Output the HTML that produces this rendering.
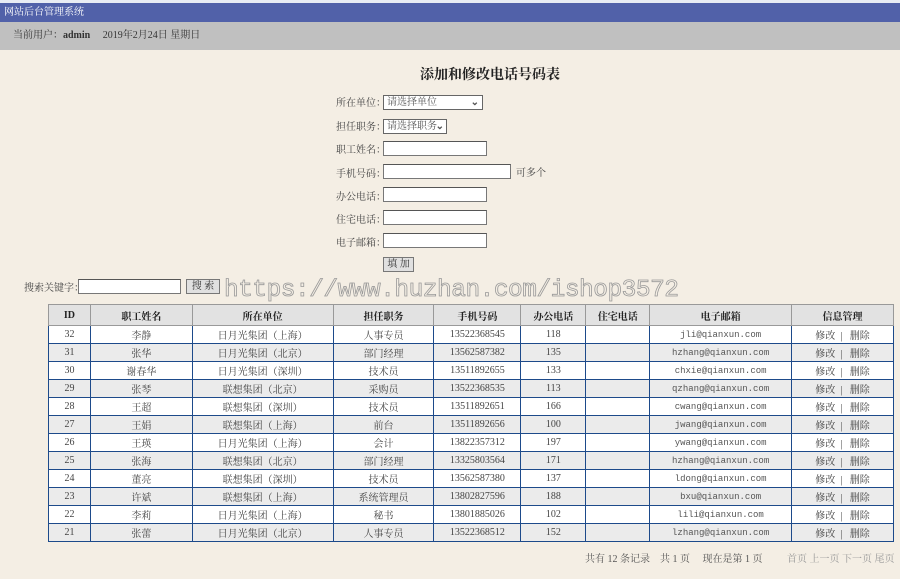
<!DOCTYPE html>
<html><head><meta charset="utf-8"><style>
*{margin:0;padding:0;box-sizing:border-box}
body{width:900px;height:579px;background:#f4eee4;font-family:"Liberation Serif","Noto Serif CJK SC",serif;font-size:10px;color:#333;position:relative;overflow:hidden}
.a{position:absolute;white-space:nowrap;line-height:12px}
.top{left:0;top:0;width:900px;height:3px;background:#e8ecf4}
.bar{left:0;top:3px;width:900px;height:19px;background:#5161a9;color:#fff;font-size:10px;line-height:19px;padding-left:4px}
.gray{left:0;top:22px;width:900px;height:28px;background:#c0c0c0;line-height:28px;padding-left:13px;font-size:10px}
.lab{left:336px;color:#444;margin-top:2px}
.inp{background:#fff;border:1px solid #777;border-top-color:#555;height:15px}
.sel{background:#fff;border:1px solid #666;height:15px;font-size:10px;color:#555;line-height:13px;padding-left:3px}
.btn{background:#e0e0e0;border:1px solid #777;height:15px;font-size:10px;line-height:13px;text-align:center;color:#333}
table{position:absolute;left:48px;top:304px;width:846px;border-collapse:collapse;font-size:10px}
th{height:21px;background:#e2e2e2;border:1px solid #999;font-weight:bold;color:#222}
td{height:18px;border:1px solid #1d4a8a;text-align:center;color:#444}
tbody tr:nth-child(even) td{background:#ebebeb}
tbody tr:nth-child(odd) td{background:#fff}
.m{font-family:"Liberation Mono",monospace;font-size:9px;color:#555}
.wm{left:224px;top:276px;font-family:"Liberation Mono",monospace;font-size:24.5px;line-height:30px;color:transparent;-webkit-text-stroke:0.8px #999;letter-spacing:-0.5px}
</style></head><body>
<div class="a top"></div>
<div class="a bar">网站后台管理系统</div>
<div class="a gray" style="line-height:28px">当前用户：<b>admin</b>&nbsp;&nbsp;&nbsp;&nbsp;&nbsp;2019年2月24日 星期日</div>
<div class="a" style="left:420px;top:68px;font-size:14px;line-height:16px;font-weight:bold;color:#222">添加和修改电话号码表</div>
<div class="a lab" style="top:96px">所在单位：</div>
<div class="a sel" style="left:383px;top:95px;width:100px">请选择单位<span style="position:absolute;right:3px;font-weight:bold">⌄</span></div>
<div class="a lab" style="top:120px">担任职务：</div>
<div class="a sel" style="left:383px;top:119px;width:64px">请选择职务<span style="position:absolute;right:2px;font-weight:bold">⌄</span></div>
<div class="a lab" style="top:143px">职工姓名：</div>
<div class="a inp" style="left:383px;top:141px;width:104px"></div>
<div class="a lab" style="top:167px">手机号码：</div>
<div class="a inp" style="left:383px;top:164px;width:128px"></div>
<div class="a" style="left:516px;top:168px;color:#444">可多个</div>
<div class="a lab" style="top:190px">办公电话：</div>
<div class="a inp" style="left:383px;top:187px;width:104px"></div>
<div class="a lab" style="top:213px">住宅电话：</div>
<div class="a inp" style="left:383px;top:210px;width:104px"></div>
<div class="a lab" style="top:236px">电子邮箱：</div>
<div class="a inp" style="left:383px;top:233px;width:104px"></div>
<div class="a btn" style="left:383px;top:257px;width:31px">填 加</div>
<div class="a" style="left:24px;top:283px;color:#444">搜索关键字：</div>
<div class="a inp" style="left:78px;top:279px;width:103px"></div>
<div class="a btn" style="left:186px;top:279px;width:34px">搜 索</div>
<div class="a wm">https://www.huzhan.com/ishop3572</div>
<table>
<colgroup><col style="width:42px"><col style="width:102px"><col style="width:141px"><col style="width:101px"><col style="width:87px"><col style="width:65px"><col style="width:64px"><col style="width:142px"><col style="width:102px"></colgroup>
<thead><tr><th>ID</th><th>职工姓名</th><th>所在单位</th><th>担任职务</th><th>手机号码</th><th>办公电话</th><th>住宅电话</th><th>电子邮箱</th><th>信息管理</th></tr></thead>
<tbody>
<tr><td>32</td><td>李静</td><td>日月光集团（上海）</td><td>人事专员</td><td>13522368545</td><td>118</td><td></td><td class="m">jli@qianxun.com</td><td>修改 &nbsp;|&nbsp;&nbsp; 删除</td></tr>
<tr><td>31</td><td>张华</td><td>日月光集团（北京）</td><td>部门经理</td><td>13562587382</td><td>135</td><td></td><td class="m">hzhang@qianxun.com</td><td>修改 &nbsp;|&nbsp;&nbsp; 删除</td></tr>
<tr><td>30</td><td>谢春华</td><td>日月光集团（深圳）</td><td>技术员</td><td>13511892655</td><td>133</td><td></td><td class="m">chxie@qianxun.com</td><td>修改 &nbsp;|&nbsp;&nbsp; 删除</td></tr>
<tr><td>29</td><td>张琴</td><td>联想集团（北京）</td><td>采购员</td><td>13522368535</td><td>113</td><td></td><td class="m">qzhang@qianxun.com</td><td>修改 &nbsp;|&nbsp;&nbsp; 删除</td></tr>
<tr><td>28</td><td>王超</td><td>联想集团（深圳）</td><td>技术员</td><td>13511892651</td><td>166</td><td></td><td class="m">cwang@qianxun.com</td><td>修改 &nbsp;|&nbsp;&nbsp; 删除</td></tr>
<tr><td>27</td><td>王娟</td><td>联想集团（上海）</td><td>前台</td><td>13511892656</td><td>100</td><td></td><td class="m">jwang@qianxun.com</td><td>修改 &nbsp;|&nbsp;&nbsp; 删除</td></tr>
<tr><td>26</td><td>王瑛</td><td>日月光集团（上海）</td><td>会计</td><td>13822357312</td><td>197</td><td></td><td class="m">ywang@qianxun.com</td><td>修改 &nbsp;|&nbsp;&nbsp; 删除</td></tr>
<tr><td>25</td><td>张海</td><td>联想集团（北京）</td><td>部门经理</td><td>13325803564</td><td>171</td><td></td><td class="m">hzhang@qianxun.com</td><td>修改 &nbsp;|&nbsp;&nbsp; 删除</td></tr>
<tr><td>24</td><td>董亮</td><td>联想集团（深圳）</td><td>技术员</td><td>13562587380</td><td>137</td><td></td><td class="m">ldong@qianxun.com</td><td>修改 &nbsp;|&nbsp;&nbsp; 删除</td></tr>
<tr><td>23</td><td>许斌</td><td>联想集团（上海）</td><td>系统管理员</td><td>13802827596</td><td>188</td><td></td><td class="m">bxu@qianxun.com</td><td>修改 &nbsp;|&nbsp;&nbsp; 删除</td></tr>
<tr><td>22</td><td>李莉</td><td>日月光集团（上海）</td><td>秘书</td><td>13801885026</td><td>102</td><td></td><td class="m">lili@qianxun.com</td><td>修改 &nbsp;|&nbsp;&nbsp; 删除</td></tr>
<tr><td>21</td><td>张蕾</td><td>日月光集团（北京）</td><td>人事专员</td><td>13522368512</td><td>152</td><td></td><td class="m">lzhang@qianxun.com</td><td>修改 &nbsp;|&nbsp;&nbsp; 删除</td></tr>
</tbody>
</table>
<div class="a" style="left:585px;top:554px;color:#555">共有 12 条记录 &nbsp;&nbsp; 共 1 页 &nbsp;&nbsp;&nbsp; 现在是第 1 页</div>
<div class="a" style="left:787px;top:554px;color:#999">首页 上一页 下一页 尾页</div>
</body></html>
